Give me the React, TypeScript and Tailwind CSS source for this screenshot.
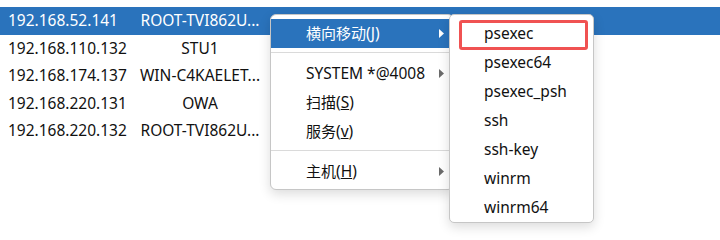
import React from 'react'

const rows = [
  { ip: '192.168.52.141', name: 'ROOT-TVI862U...', selected: true },
  { ip: '192.168.110.132', name: 'STU1' },
  { ip: '192.168.174.137', name: 'WIN-C4KAELET...' },
  { ip: '192.168.220.131', name: 'OWA' },
  { ip: '192.168.220.132', name: 'ROOT-TVI862U...' },
]

const subItems = ['psexec', 'psexec64', 'psexec_psh', 'ssh', 'ssh-key', 'winrm', 'winrm64']

function Arrow({ white }: { white?: boolean }) {
  return (
    <svg width="5" height="9" viewBox="0 0 5 9" className="ml-auto mr-[9px] shrink-0">
      <path d="M0 0 L5 4.5 L0 9 Z" fill={white ? '#ffffff' : '#6b6b6b'} />
    </svg>
  )
}

function Separator() {
  return (
    <div className="pt-[4px] pb-[6px]">
      <div className="h-[1px] bg-[#dadada]" />
    </div>
  )
}

function MenuItem({
  children,
  active,
  arrow,
}: {
  children: React.ReactNode
  active?: boolean
  arrow?: boolean
}) {
  return (
    <div
      className={`flex items-center h-[29px] pl-[35px] ${
        active ? 'bg-[#2a73bc] text-white' : 'text-[#111]'
      }`}
    >
      <span>{children}</span>
      {arrow && <Arrow white={active} />}
    </div>
  )
}

// CJK label with an underlined access key, e.g. 扫描(S)
function Label({ zh, k }: { zh: string; k: string }) {
  return (
    <>
      <span className="text-[15px]">{zh}</span>(<span className="underline">{k}</span>)
    </>
  )
}

export default function App() {
  return (
    <div
      className="relative w-[720px] h-[240px] bg-white overflow-hidden text-[15.5px] leading-none"
      style={{ fontFamily: '"Noto Sans", "Noto Sans CJK SC", sans-serif' }}
    >
      {/* Host list */}
      <div className="pt-[7px]">
        {rows.map((r) => (
          <div
            key={r.ip + r.name}
            className={`flex items-center h-[27.5px] ${
              r.selected ? 'bg-[#2a73bc] text-white' : 'text-[#111]'
            }`}
          >
            <div className="w-[134px] pl-[8px] whitespace-nowrap">{r.ip}</div>
            <div className="w-[132px] text-center whitespace-nowrap">{r.name}</div>
          </div>
        ))}
      </div>

      {/* Context menu */}
      <div className="absolute left-[270px] top-[14px] w-[184px] bg-white border border-[#c6c6c6] rounded-[6px] pt-[4px] pb-[3px] shadow-[0_4px_12px_rgba(0,0,0,0.14)]">
        <MenuItem active arrow>
          <Label zh="横向移动" k="J" />
        </MenuItem>
        <Separator />
        <MenuItem arrow>SYSTEM *@4008</MenuItem>
        <MenuItem>
          <Label zh="扫描" k="S" />
        </MenuItem>
        <MenuItem>
          <Label zh="服务" k="v" />
        </MenuItem>
        <Separator />
        <MenuItem arrow>
          <Label zh="主机" k="H" />
        </MenuItem>
      </div>

      {/* Submenu */}
      <div className="absolute left-[449px] top-[14px] w-[145px] bg-white border border-[#c6c6c6] rounded-[5px] pt-[4px] shadow-[0_4px_12px_rgba(0,0,0,0.14)]">
        {subItems.map((s) => (
          <div key={s} className="flex items-center h-[29px] pl-[34px] text-[#111]">
            {s}
          </div>
        ))}
        <div className="absolute left-[9px] top-[5px] w-[129px] h-[30px] border-[3px] border-[#f05252] rounded-[3px]" />
      </div>
    </div>
  )
}
